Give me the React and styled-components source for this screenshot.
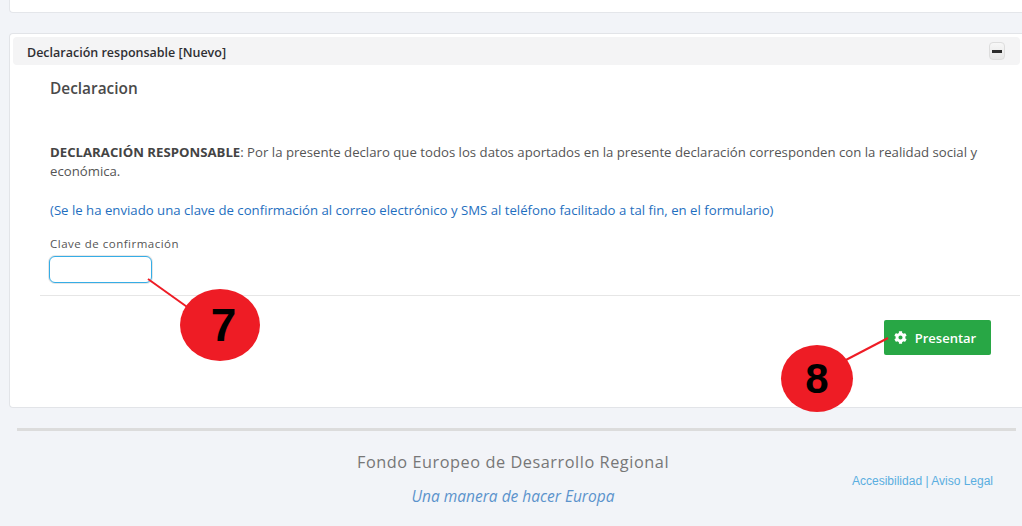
import React from 'react'
import styled, { createGlobalStyle } from 'styled-components'
import { FaCog } from 'react-icons/fa'

const GlobalStyle = createGlobalStyle`
  html, body {
    margin: 0;
    padding: 0;
    background: #f2f4f8;
  }
  body {
    font-family: "Open Sans", "Liberation Sans", sans-serif;
    color: #444;
    overflow: hidden;
  }
`

const Page = styled.div`
  position: relative;
  width: 1022px;
  height: 526px;
  overflow: hidden;
`

const Main = styled.div`
  padding-left: 9px;
`

const TopCard = styled.div`
  height: 12px;
  background: #fff;
  border: 1px solid #e4e6ea;
  border-top: 0;
  border-right: 0;
  border-bottom-left-radius: 4px;
`

const Card = styled.section`
  margin-top: 20px;
  height: 375px;
  box-sizing: border-box;
  background: #fff;
  border: 1px solid #e2e4e8;
  border-right: 0;
  border-radius: 4px 0 0 4px;
  padding: 3px 2px 0 3px;
`

const CardHeader = styled.header`
  height: 28px;
  box-sizing: border-box;
  display: flex;
  align-items: center;
  justify-content: space-between;
  padding: 0 15px 0 14px;
  background: #f4f4f5;
  border-radius: 4px;
`

const CardTitle = styled.h2`
  margin: 0;
  padding-top: 2px;
  font-size: 12.5px;
  font-weight: 600;
  color: #2f2f33;
`

const CollapseButton = styled.button`
  width: 16px;
  height: 18px;
  padding: 0;
  display: flex;
  align-items: center;
  justify-content: center;
  background: linear-gradient(#f7f7f7, #e6e6e6);
  border: 1px solid #dddddd;
  border-radius: 4px;
`

const MinusBar = styled.span`
  width: 10px;
  height: 3px;
  background: #2b2b2b;
`

const CardBody = styled.div`
  padding: 0 0 0 27px;
`

const Content = styled.div`
  padding-left: 10px;
`

const Heading = styled.h3`
  margin: 0;
  padding-top: 14px;
  font-size: 15.4px;
  line-height: 20px;
  font-weight: 600;
  color: #4a4a4a;
`

const Statement = styled.p`
  margin: 44px 0 0;
  width: 940px;
  font-size: 13.2px;
  line-height: 19px;
  color: #555;
`

const Strong = styled.strong`
  font-weight: 700;
  color: #444;
`

const Notice = styled.p`
  margin: 20px 0 0;
  font-size: 13.2px;
  line-height: 19px;
  color: #1f6fc0;
`

const FieldLabel = styled.label`
  display: block;
  margin-top: 16px;
  font-size: 11.5px;
  line-height: 16px;
  letter-spacing: 0.5px;
  color: #555;
`

const KeyInput = styled.input`
  display: block;
  margin: 4px 0 0 -1px;
  width: 103px;
  height: 27px;
  box-sizing: border-box;
  padding: 0 6px;
  background: #fff;
  border: 1px solid #35ade6;
  border-radius: 6px;
  box-shadow: 0 0 0 1px #e6e6e6;
  outline: none;
`

const Divider = styled.hr`
  margin: 12px 0 0;
  border: 0;
  border-top: 1px solid #e6e6e6;
`

const Actions = styled.div`
  display: flex;
  justify-content: flex-end;
  padding: 24px 29px 0 0;
`

const SubmitButton = styled.button`
  width: 107px;
  height: 35px;
  box-sizing: border-box;
  display: flex;
  align-items: center;
  justify-content: center;
  gap: 8px;
  padding: 0 5px 0 0;
  background: #28a745;
  border: 0;
  border-radius: 2px;
  color: #fff;
  font-family: "Open Sans", "Liberation Sans", sans-serif;
  font-size: 13px;
  font-weight: 600;
`

const Footer = styled.footer`
  margin: 20px 6px 0 17px;
  border-top: 3px solid #dcdcdc;
  display: grid;
  grid-template-columns: 1fr 1fr 1fr;
`

const Fund = styled.div`
  grid-column: 2;
  width: 340px;
  margin-left: -7px;
  text-align: center;
  padding-top: 21px;
`

const FundName = styled.div`
  font-size: 16.3px;
  line-height: 20px;
  letter-spacing: 0.55px;
  color: #777;
`

const Motto = styled.div`
  margin-top: 14px;
  font-size: 15.5px;
  line-height: 20px;
  font-style: italic;
  color: #5b93cc;
`

const LegalLinks = styled.div`
  grid-column: 3;
  justify-self: end;
  padding: 43px 23px 0 0;
  font-family: "Liberation Sans", Arial, sans-serif;
  font-size: 12px;
  line-height: 14px;
  color: #5aaee0;
`

const Callout = styled.div`
  position: absolute;
  left: ${p => p.$left}px;
  top: ${p => p.$top}px;
  width: ${p => p.$width}px;
  height: ${p => p.$height}px;
  box-sizing: border-box;
  display: flex;
  align-items: center;
  justify-content: center;
  padding-left: ${p => p.$shift || 0}px;
  border-radius: 50%;
  background: #ee1c25;
  color: #000;
  font-family: "Liberation Sans", Arial, sans-serif;
  font-size: ${p => p.$size}px;
  font-weight: 700;
`

const Leaders = styled.svg`
  position: absolute;
  left: 0;
  top: 0;
`

export default function App () {
  return (
    <Page>
      <GlobalStyle />
      <Main>
        <TopCard />
        <Card>
          <CardHeader>
            <CardTitle>Declaración responsable [Nuevo]</CardTitle>
            <CollapseButton aria-label='Contraer'><MinusBar /></CollapseButton>
          </CardHeader>
          <CardBody>
            <Content>
              <Heading>Declaracion</Heading>
              <Statement>
                <Strong>DECLARACIÓN RESPONSABLE</Strong>: Por la presente declaro que todos los datos aportados en la presente declaración corresponden con la realidad social y económica.
              </Statement>
              <Notice>(Se le ha enviado una clave de confirmación al correo electrónico y SMS al teléfono facilitado a tal fin, en el formulario)</Notice>
              <FieldLabel htmlFor='clave'>Clave de confirmación</FieldLabel>
              <KeyInput id='clave' type='text' />
            </Content>
            <Divider />
            <Actions>
              <SubmitButton><FaCog size={13} />Presentar</SubmitButton>
            </Actions>
          </CardBody>
        </Card>
      </Main>
      <Footer>
        <Fund>
          <FundName>Fondo Europeo de Desarrollo Regional</FundName>
          <Motto>Una manera de hacer Europa</Motto>
        </Fund>
        <LegalLinks>Accesibilidad | Aviso Legal</LegalLinks>
      </Footer>
      <Leaders width='1022' height='526'>
        <line x1='148' y1='279' x2='190' y2='309' stroke='#ee1c25' strokeWidth='2' />
        <line x1='888' y1='338' x2='842' y2='362' stroke='#ee1c25' strokeWidth='2' />
      </Leaders>
      <Callout $left={180} $top={289} $width={80} $height={72} $size={46} $shift={7}>7</Callout>
      <Callout $left={781} $top={345} $width={72} $height={67} $size={42}>8</Callout>
    </Page>
  )
}
